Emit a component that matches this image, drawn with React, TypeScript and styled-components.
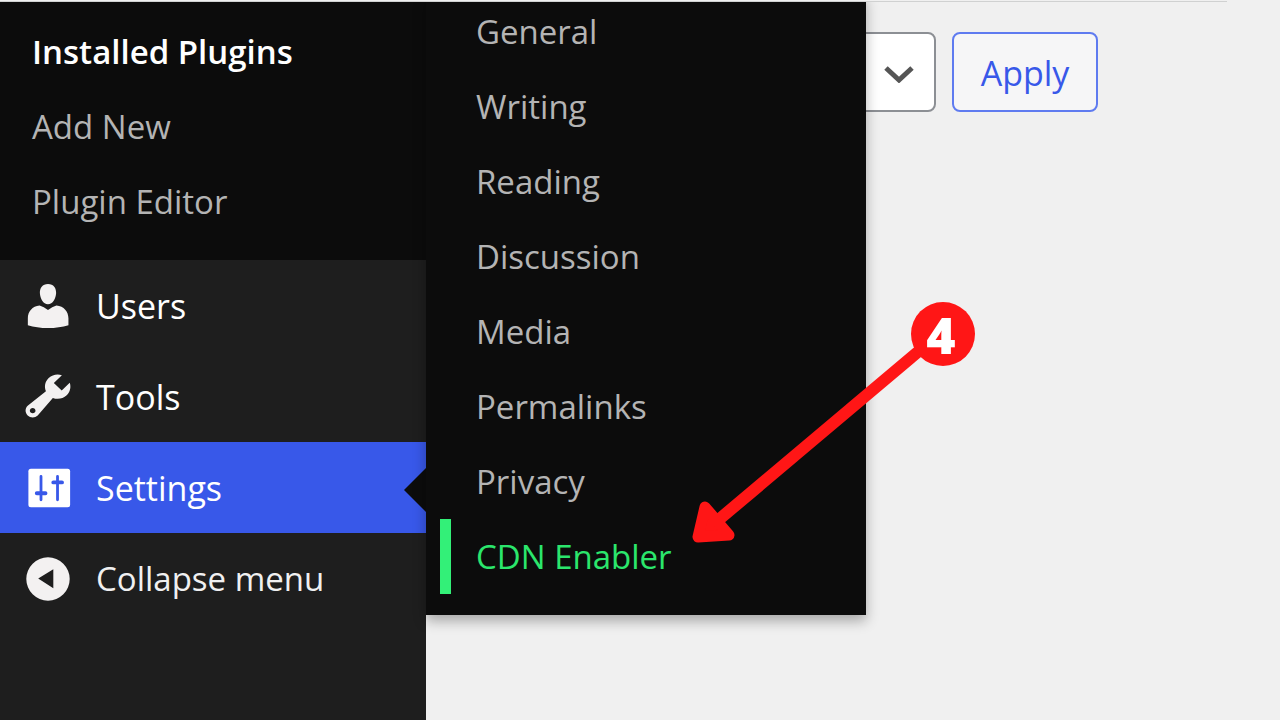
import React from "react";
import styled, { createGlobalStyle } from "styled-components";

const ink = "#0c0c0c";
const accent = "#3858e9";
const highlight = "#33f078";
const marker = "#ff1616";

const GlobalStyle = createGlobalStyle`
  *, *::before, *::after { box-sizing: border-box; }
  body {
    margin: 0;
    background: #f0f0f0;
    font-family: "Open Sans", "Noto Sans", sans-serif;
    font-size: 34px;
  }
  ul { list-style: none; margin: 0; padding: 0; }
  a { color: inherit; text-decoration: none; }
`;

const Page = styled.div`
  position: relative;
  display: flex;
  flex-direction: column;
  min-height: 100vh;
  overflow: hidden;
`;

const TopEdge = styled.header`
  position: relative;
  z-index: 3;
  height: 2px;
  padding-right: 53px;
  background: #f0f0f0;
`;

const TopLine = styled.div`
  height: 2px;
  border-bottom: 1px solid #d0d1d1;
`;

const Columns = styled.div`
  display: flex;
  flex: 1;
`;

const Sidebar = styled.nav`
  flex: 0 0 426px;
  background: #1e1e1e;
`;

const PluginLinks = styled.ul`
  padding: 12px 32px 21px;
  background: ${ink};
`;

const PluginLink = styled.a<{ $current?: boolean }>`
  display: flex;
  align-items: center;
  height: 75px;
  color: ${(p) => (p.$current ? "#ffffff" : "#b4b4b4")};
  font-weight: ${(p) => (p.$current ? 600 : 400)};
  font-size: 33px;
`;

const MenuItem = styled.li`
  position: relative;
`;

const MenuLink = styled.a<{ $active?: boolean }>`
  display: flex;
  align-items: center;
  gap: 20px;
  height: 91px;
  padding-left: 20px;
  color: #ffffff;
  background: ${(p) => (p.$active ? accent : "transparent")};
`;

const CollapseButton = styled.button`
  display: flex;
  align-items: center;
  gap: 20px;
  width: 100%;
  height: 91px;
  padding: 0 0 0 20px;
  border: 0;
  background: transparent;
  color: #f0f0f1;
  font: inherit;
  font-size: 33px;
`;

const MenuIcon = styled.svg`
  flex: none;
  width: 56px;
  height: 56px;
  fill: #f3f1f1;
`;

const Notch = styled.span`
  position: absolute;
  right: 0;
  top: 26px;
  border: 22px solid transparent;
  border-left-width: 0;
  border-right-color: ${ink};
`;

const Flyout = styled.ul`
  position: absolute;
  z-index: 2;
  left: 100%;
  bottom: -82px;
  width: 440px;
  padding: 0 0 21px 14px;
  background: ${ink};
  box-shadow: 0 6px 12px rgba(0, 0, 0, 0.3);
`;

const FlyoutLink = styled.a<{ $current?: boolean }>`
  display: flex;
  align-items: center;
  height: 75px;
  padding-left: 25px;
  border-left: 11px solid ${(p) => (p.$current ? highlight : "transparent")};
  color: ${(p) => (p.$current ? "#2be66c" : "#b4b4b4")};
  font-size: 33px;
`;

const Content = styled.main`
  flex: 1;
  padding: 30px 24px;
`;

const Toolbar = styled.form`
  display: flex;
  gap: 16px;
`;

const SelectWrap = styled.div`
  position: relative;
  flex: 0 0 486px;
`;

const BulkSelect = styled.select`
  appearance: none;
  width: 100%;
  height: 80px;
  border: 2px solid #8c8f94;
  border-radius: 8px;
  background: #ffffff;
  font: inherit;
`;

const Chevron = styled.svg`
  position: absolute;
  right: 22px;
  top: 33px;
  width: 30px;
  height: 18px;
  fill: none;
  stroke: #555555;
  stroke-width: 5px;
  pointer-events: none;
`;

const ApplyButton = styled.button`
  flex: 0 0 146px;
  height: 80px;
  padding: 2px 0 0;
  border: 2px solid #5f7bf0;
  border-radius: 8px;
  background: #f6f6f7;
  color: ${accent};
  font: inherit;
`;

const Callout = styled.div`
  position: absolute;
  z-index: 4;
  left: 692px;
  top: 302px;
  width: 283px;
  height: 243px;
  pointer-events: none;
`;

const Arrow = styled.svg`
  display: block;
  width: 100%;
  height: 100%;
  fill: ${marker};
  stroke: ${marker};
  stroke-linejoin: round;
`;

const StepBadge = styled.span`
  position: absolute;
  right: 0;
  top: 0;
  display: grid;
  place-items: center;
  width: 64px;
  height: 64px;
  padding: 0 4px 0 0;
  border-radius: 50%;
  background: ${marker};
  color: #ffffff;
  font-size: 50px;
  font-weight: 800;
  line-height: 66px;
`;

const UsersIcon = () => (
  <MenuIcon viewBox="0 0 20 20" aria-hidden="true">
    <path d="M10 2.1c2 0 3 1.5 2.9 3.3C12.8 7.4 11.7 9.4 10 9.4S7.2 7.4 7.1 5.4C7 3.6 8 2.1 10 2.1z" />
    <path d="M7 9.8Q8.5 10.3 10 11.4Q11.5 10.3 13 9.8C15.7 10 17.3 12 17.3 14.4V16.9Q14 17.9 10 17.9Q6 17.9 2.8 16.9V14.4C2.8 12 4.4 10 7 9.8z" />
  </MenuIcon>
);

const ToolsIcon = () => (
  <MenuIcon viewBox="0 0 20 20" aria-hidden="true">
    <path
      transform="scale(1 0.96)"
      d="M16.68 9.77c-1.34 1.34-3.3 1.67-4.95.99l-5.41 6.52c-.99.99-2.59.99-3.58 0s-.99-2.59 0-3.57l6.52-5.42c-.68-1.65-.35-3.61.99-4.95 1.28-1.28 3.12-1.62 4.72-1.06l-2.89 2.89 2.82 2.82 2.86-2.87c.53 1.58.18 3.39-1.08 4.65zM3.81 16.21c.4.39 1.04.39 1.43 0 .4-.4.4-1.04 0-1.43-.39-.4-1.03-.4-1.43 0-.39.39-.39 1.03 0 1.43z"
    />
  </MenuIcon>
);

const SettingsIcon = () => (
  <MenuIcon viewBox="0 0 20 20" aria-hidden="true">
    <rect x="3" y="3.1" width="14.9" height="13.8" rx="0.9" fill="#ffffff" />
    <g stroke={accent} strokeLinecap="round">
      <path d="M7.5 5.9v8.3M13.4 5.9v8.3" strokeWidth="1" />
      <path d="M6 11.9h3.1M11.9 8h3.1" strokeWidth="1.4" />
    </g>
  </MenuIcon>
);

const CollapseIcon = () => (
  <MenuIcon viewBox="0 0 20 20" aria-hidden="true">
    <path
      fillRule="evenodd"
      d="M10 2.25a7.75 7.75 0 1 1 0 15.5a7.75 7.75 0 0 1 0-15.5zM11.9 6.5L6.5 9.8l5.4 3.5z"
    />
  </MenuIcon>
);

const settingsPages = [
  "General",
  "Writing",
  "Reading",
  "Discussion",
  "Media",
  "Permalinks",
  "Privacy",
  "CDN Enabler",
];

export default function App() {
  return (
    <Page>
      <GlobalStyle />
      <TopEdge>
        <TopLine />
      </TopEdge>
      <Columns>
        <Sidebar aria-label="Main menu">
          <PluginLinks>
            <li><PluginLink href="#installed" $current>Installed Plugins</PluginLink></li>
            <li><PluginLink href="#add">Add New</PluginLink></li>
            <li><PluginLink href="#editor">Plugin Editor</PluginLink></li>
          </PluginLinks>
          <ul>
            <MenuItem>
              <MenuLink href="#users"><UsersIcon />Users</MenuLink>
            </MenuItem>
            <MenuItem>
              <MenuLink href="#tools"><ToolsIcon />Tools</MenuLink>
            </MenuItem>
            <MenuItem>
              <MenuLink href="#settings" $active><SettingsIcon />Settings</MenuLink>
              <Notch />
              <Flyout>
                {settingsPages.map((name) => (
                  <li key={name}>
                    <FlyoutLink href="#page" $current={name === "CDN Enabler"}>
                      {name}
                    </FlyoutLink>
                  </li>
                ))}
              </Flyout>
            </MenuItem>
            <MenuItem>
              <CollapseButton type="button"><CollapseIcon />Collapse menu</CollapseButton>
            </MenuItem>
          </ul>
        </Sidebar>
        <Content>
          <Toolbar>
            <SelectWrap>
              <BulkSelect aria-label="Bulk actions"><option /></BulkSelect>
              <Chevron viewBox="0 0 30 18" aria-hidden="true">
                <path d="M2 3l13 12L28 3" />
              </Chevron>
            </SelectWrap>
            <ApplyButton type="button">Apply</ApplyButton>
          </Toolbar>
        </Content>
      </Columns>
      <Callout>
        <Arrow viewBox="0 0 283 243" aria-hidden="true">
          <path d="M24 220L240 38" strokeWidth="12" />
          <path d="M13 205L37 233L6 235z" strokeWidth="11" />
        </Arrow>
        <StepBadge>4</StepBadge>
      </Callout>
    </Page>
  );
}
